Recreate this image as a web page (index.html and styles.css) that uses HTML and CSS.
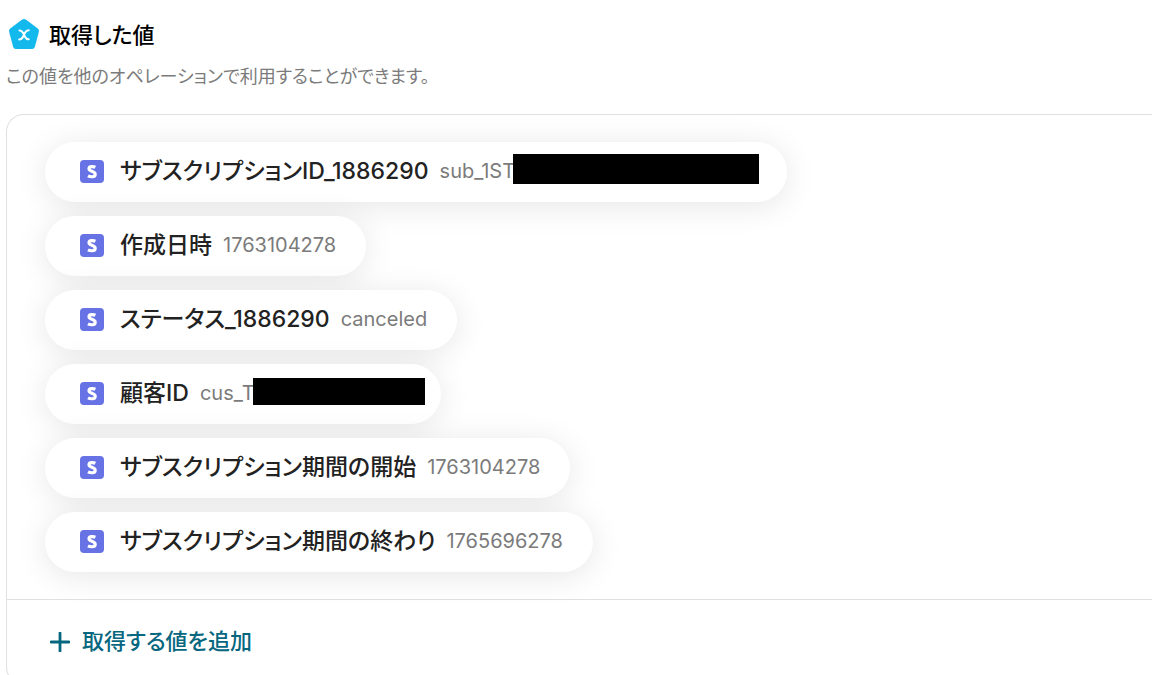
FILE: index.html
```html
<!DOCTYPE html>
<html lang="ja">
<head>
<meta charset="utf-8">
<meta name="viewport" content="width=device-width, initial-scale=1">
<title>取得した値</title>
<link rel="stylesheet" href="styles.css">
</head>
<body>
<svg class="symbols" aria-hidden="true">
  <symbol id="service" viewBox="0 0 24 24">
    <rect y="1" width="24" height="23" rx="4" fill="#6772e5"/>
    <path d="M15.400 8.200C14 7.500 9 6.700 9 9.700c0 3 6.200 2.200 6.200 5.500 0 3.400-5.200 2.800-7.200 1.700" fill="none" stroke="#fff" stroke-width="3.200"/>
  </symbol>
</svg>
<main class="output">
  <header class="head">
    <svg class="logo" viewBox="0 0 32 32" aria-hidden="true">
      <path d="M16 4 28 13 24 28H8L4 13Z" fill="#13b9ec" stroke="#13b9ec" stroke-width="6" stroke-linejoin="round"/>
      <path d="M11.500 12.500c2.200-.2 2.700.8 3.500 2.300l2 4c.8 1.500 1.500 2.800 3.700 2.500M20.700 12.300c-2.200 0-2.900 1-3.700 2.500l-2 4c-.8 1.500-1.500 2.700-3.800 2.700" fill="none" stroke="#fff" stroke-width="2" stroke-linecap="round"/>
    </svg>
    <h1 class="title">取得した値</h1>
  </header>
  <p class="lead">この値を他のオペレーションで利用することができます。</p>
  <section class="card">
    <ul class="values">
      <li class="pill pill-long"><svg class="icon" aria-hidden="true"><use href="#service"/></svg><span class="name">サブスクリプションID_1886290</span><span class="value">sub_1ST</span><span class="mask mask-long"></span></li>
      <li class="pill"><svg class="icon" aria-hidden="true"><use href="#service"/></svg><span class="name">作成日時</span><span class="value">1763104278</span></li>
      <li class="pill"><svg class="icon" aria-hidden="true"><use href="#service"/></svg><span class="name">ステータス_1886290</span><span class="value">canceled</span></li>
      <li class="pill pill-tight"><svg class="icon" aria-hidden="true"><use href="#service"/></svg><span class="name">顧客ID</span><span class="value">cus_T</span><span class="mask"></span></li>
      <li class="pill"><svg class="icon" aria-hidden="true"><use href="#service"/></svg><span class="name">サブスクリプション期間の開始</span><span class="value">1763104278</span></li>
      <li class="pill"><svg class="icon" aria-hidden="true"><use href="#service"/></svg><span class="name">サブスクリプション期間の終わり</span><span class="value">1765696278</span></li>
    </ul>
    <footer class="foot">
      <button class="add" type="button">
        <svg class="plus" viewBox="0 0 20 20" aria-hidden="true"><path d="M10 1v18M1 10h18" stroke="currentColor" stroke-width="2.800" stroke-linecap="round"/></svg>
        取得する値を追加
      </button>
    </footer>
  </section>
</main>
</body>
</html>
```
FILE: styles.css
```css
* { box-sizing: border-box; }
body {
  margin: 0;
  background: #fff;
  color: #222;
  font-family: Inter, "Noto Sans CJK JP", sans-serif;
  font-feature-settings: "palt";
}
.symbols { position: absolute; width: 0; height: 0; }
.output { padding: 18px 0 18px 6px; }
.head { display: flex; align-items: flex-start; gap: 9px; padding-left: 2px; }
.logo { width: 32px; height: 32px; }
.title { margin: 0; color: #000; font-size: 22px; line-height: 34px; font-weight: 500; }
.lead { margin: 12px 0 24px; color: #7b7b7b; font-size: 18px; line-height: 26px; }
.card { border: 1px solid #e0e0e0; border-right: 0; border-radius: 18px 0 0 18px; }
.values {
  display: flex;
  flex-direction: column;
  align-items: flex-start;
  gap: 14px;
  margin: 0;
  padding: 27px 38px;
  list-style: none;
}
.pill {
  display: flex;
  align-items: center;
  height: 60px;
  padding: 0 30px 2px 35px;
  border-radius: 30px;
  background: #fff;
  box-shadow: 0 4px 32px rgba(0, 0, 0, 0.1);
  white-space: nowrap;
}
.pill-long { padding-right: 28px; }
.pill-tight { padding-right: 16px; }
.icon { width: 24px; height: 24px; margin-right: 16px; }
.name { font-size: 23px; line-height: 32px; font-weight: 500; }
.value { margin-left: 11px; color: #7b7b7b; font-size: 20px; line-height: 32px; }
.mask { width: 172px; height: 27px; margin: 0 0 4px -2px; background: #000; }
.mask-long { width: 246px; height: 30px; }
.foot { padding: 24px 43px; border-top: 1px solid #e0e0e0; }
.add {
  display: flex;
  align-items: center;
  gap: 12px;
  padding: 0 0 1px;
  border: 0;
  background: none;
  color: #07677f;
  font: inherit;
  font-size: 22px;
  font-weight: 500;
  line-height: 35px;
}
.plus { width: 20px; height: 20px; }
```
